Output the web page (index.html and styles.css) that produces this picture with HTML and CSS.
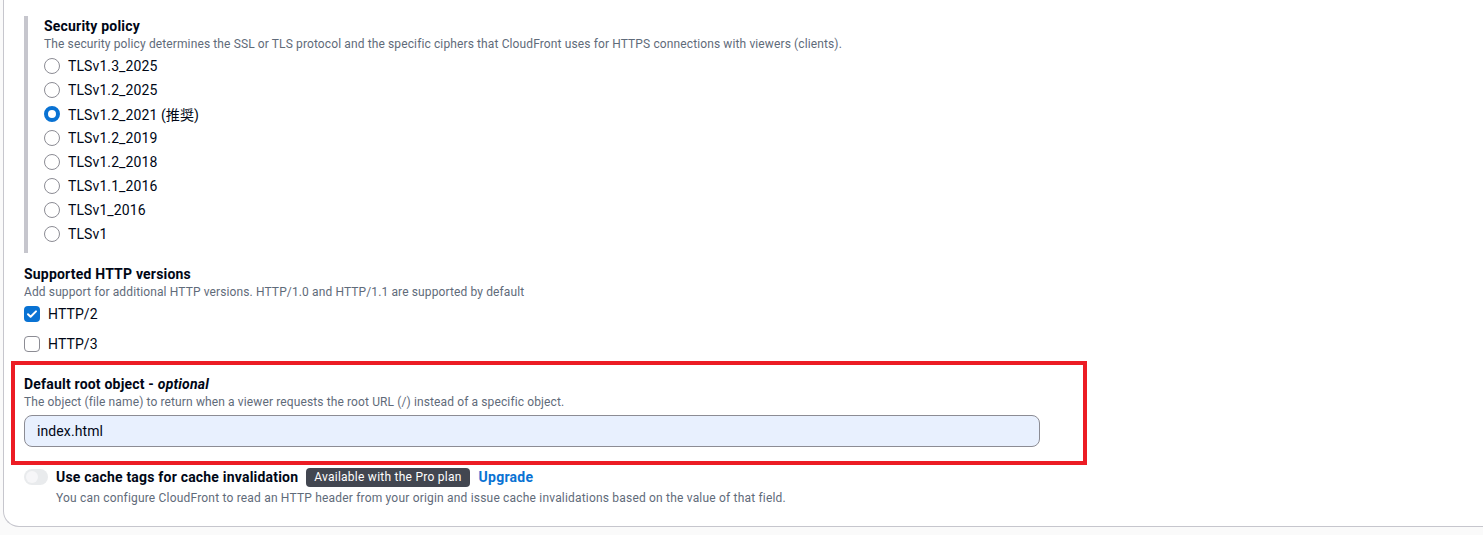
FILE: index.html
```html
<!DOCTYPE html>
<html lang="en">
<head>
<meta charset="utf-8">
<title>CloudFront settings</title>
<link rel="stylesheet" href="styles.css">
</head>
<body>
<div class="card">
  <div class="policy">
    <div class="title">Security policy</div>
    <div class="desc">The security policy determines the SSL or TLS protocol and the specific ciphers that CloudFront uses for HTTPS connections with viewers (clients).</div>
    <div class="radios">
      <label class="radio"><span class="dot"></span><span>TLSv1.3_2025</span></label>
      <label class="radio"><span class="dot"></span><span>TLSv1.2_2025</span></label>
      <label class="radio"><span class="dot on"></span><span>TLSv1.2_2021 (推奨)</span></label>
      <label class="radio"><span class="dot"></span><span>TLSv1.2_2019</span></label>
      <label class="radio"><span class="dot"></span><span>TLSv1.2_2018</span></label>
      <label class="radio"><span class="dot"></span><span>TLSv1.1_2016</span></label>
      <label class="radio"><span class="dot"></span><span>TLSv1_2016</span></label>
      <label class="radio"><span class="dot"></span><span>TLSv1</span></label>
    </div>
  </div>

  <div class="http">
    <div class="title">Supported HTTP versions</div>
    <div class="desc">Add support for additional HTTP versions. HTTP/1.0 and HTTP/1.1 are supported by default</div>
    <div class="checks">
      <label class="check"><span class="box on"><svg width="16" height="16" viewBox="0 0 16 16"><path d="M4 8.2l2.6 2.6L12 5.4" fill="none" stroke="#fff" stroke-width="2" stroke-linecap="round" stroke-linejoin="round"/></svg></span><span>HTTP/2</span></label>
      <label class="check"><span class="box"></span><span>HTTP/3</span></label>
    </div>
  </div>

  <div class="highlight">
    <div class="title">Default root object - <i>optional</i></div>
    <div class="desc">The object (file name) to return when a viewer requests the root URL (/) instead of a specific object.</div>
    <div class="input">index.html</div>
  </div>

  <div class="cache">
    <div class="cache-row">
      <span class="toggle"><span class="knob"></span></span>
      <span class="cache-label">Use cache tags for cache invalidation</span>
      <span class="badge">Available with the Pro plan</span>
      <a class="link">Upgrade</a>
    </div>
    <div class="desc cache-desc">You can configure CloudFront to read an HTTP header from your origin and issue cache invalidations based on the value of that field.</div>
  </div>
</div>
</body>
</html>
```

FILE: styles.css
```css
html, body {
  margin: 0;
  padding: 0;
}
body {
  background: #fafafa;
  font-family: Roboto, "Noto Sans CJK JP", sans-serif;
  color: #000716;
  overflow: hidden;
  width: 1483px;
  height: 535px;
  letter-spacing: 0.1px;
}
.card {
  margin-left: 3px;
  margin-right: -40px;
  background: #fff;
  border-left: 1px solid #c6c6cd;
  border-bottom: 1px solid #c6c6cd;
  border-bottom-left-radius: 16px;
  padding: 16px 0 20px 20px;
}
.title {
  font-size: 14px;
  font-weight: 700;
  line-height: 20px;
  letter-spacing: 0.2px;
}
.title i {
  font-style: italic;
}
.desc {
  font-size: 12px;
  line-height: 16px;
  color: #5f6b7a;
  letter-spacing: 0.12px;
}
.policy {
  border-left: 4px solid #c6c6cd;
  padding: 0 0 7px 16px;
}
.radios {
  margin-top: 2px;
  display: flex;
  flex-direction: column;
}
.radio {
  display: flex;
  align-items: center;
  height: 24px;
  font-size: 14px;
}
.dot {
  width: 16px;
  height: 16px;
  box-sizing: border-box;
  border: 1.5px solid #8c8c94;
  border-radius: 50%;
  margin-right: 8px;
  background: #fff;
}
.dot.on {
  border: 4.5px solid #0972d3;
}
.http {
  margin-top: 11px;
}
.checks {
  margin-top: 2px;
  display: flex;
  flex-direction: column;
  gap: 6px;
}
.check {
  display: flex;
  align-items: center;
  height: 24px;
  font-size: 14px;
}
.box {
  width: 16px;
  height: 16px;
  box-sizing: border-box;
  border: 1.5px solid #8c8c94;
  border-radius: 4px;
  margin-right: 8px;
  display: flex;
}
.box.on {
  background: #0972d3;
  border: none;
}
.highlight {
  margin: 5px 0 0 -13px;
  width: 1076px;
  box-sizing: border-box;
  border: 4px solid #ec1c24;
  padding: 9px 0 14px 9px;
}
.highlight .desc {
  margin-bottom: 5px;
}
.input {
  width: 1016px;
  height: 32px;
  box-sizing: border-box;
  background: #e8f0fe;
  border: 1px solid #8c8c94;
  border-radius: 8px;
  font-size: 14px;
  line-height: 30px;
  padding-left: 12px;
}
.cache-row {
  display: flex;
  align-items: center;
  height: 20px;
  margin-top: 2px;
}
.toggle {
  width: 24px;
  height: 16px;
  border-radius: 8px;
  background: #e9ebed;
  display: flex;
  align-items: center;
  padding-left: 2px;
  box-sizing: border-box;
  margin-right: 8px;
}
.knob {
  width: 12px;
  height: 12px;
  border-radius: 50%;
  background: #f6f6f8;
}
.cache-label {
  font-size: 14px;
  font-weight: 700;
  letter-spacing: 0.2px;
}
.badge {
  margin-left: 8px;
  background: #424650;
  color: #fff;
  font-size: 12px;
  line-height: 19px;
  padding: 0 8px;
  border-radius: 4px;
  letter-spacing: 0.25px;
}
.link {
  margin-left: 9px;
  color: #0972d3;
  font-weight: 700;
  font-size: 14px;
  letter-spacing: 0.25px;
}
.cache-desc {
  margin: 3px 0 0 32px;
  letter-spacing: 0.19px;
}
```
